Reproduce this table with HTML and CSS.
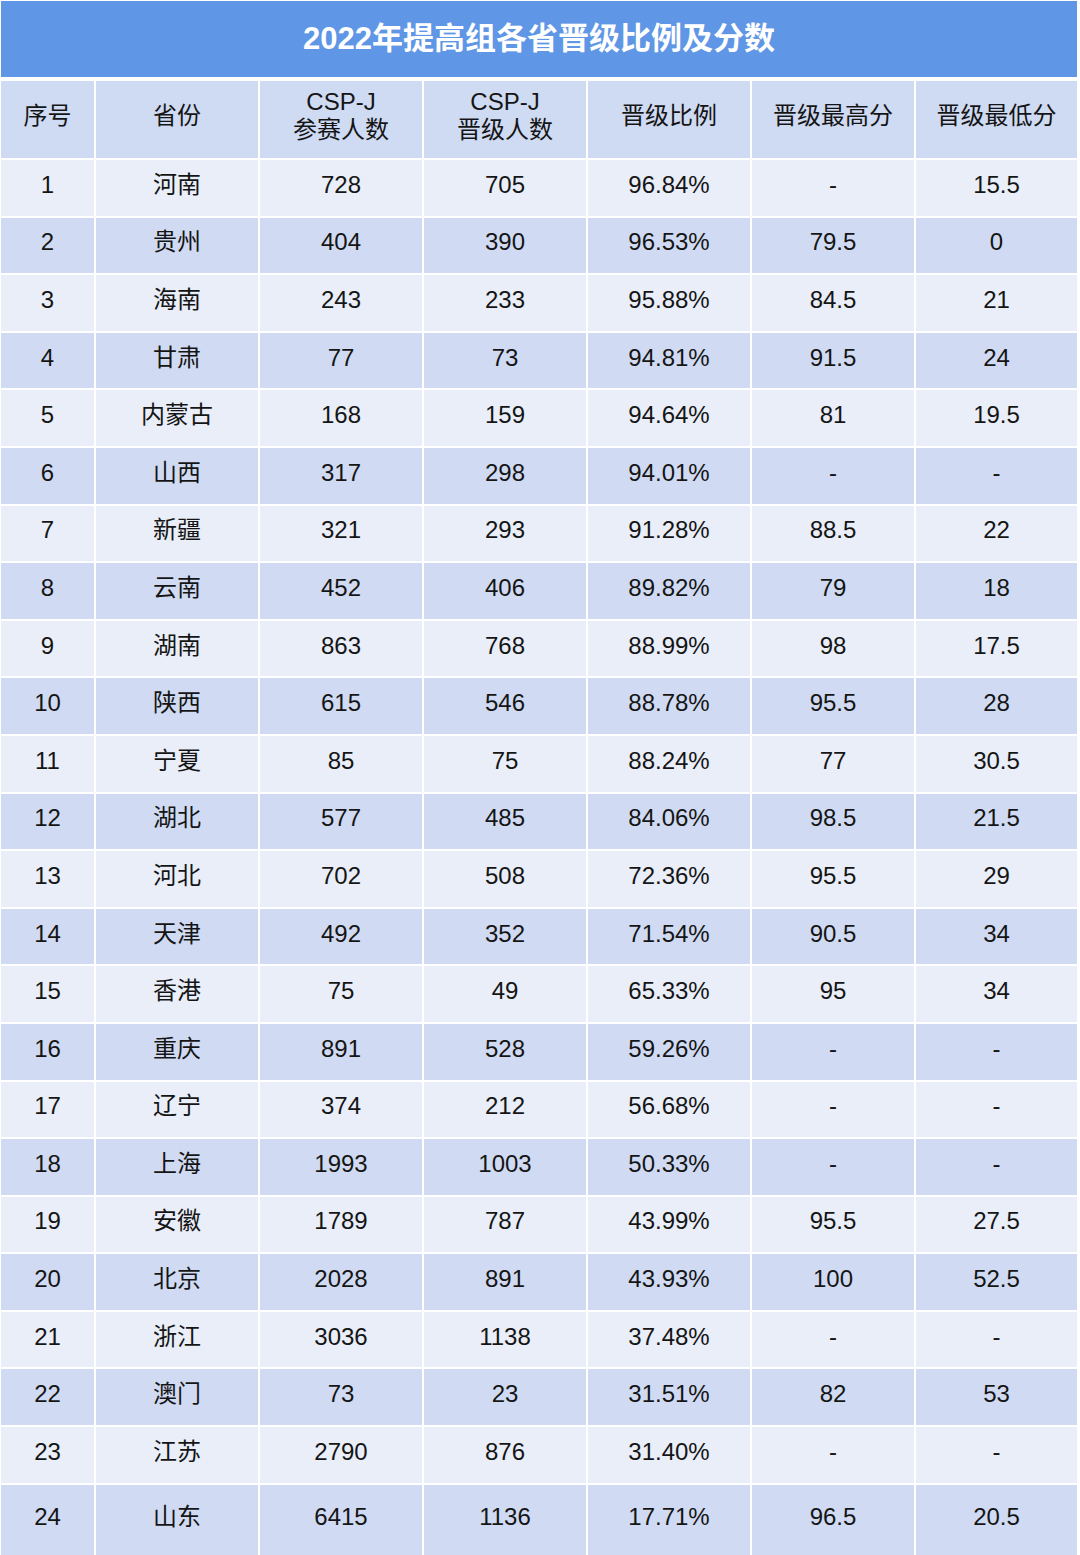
FILE: index.html
```html
<!DOCTYPE html>
<html lang="zh">
<head>
<meta charset="utf-8">
<link rel="stylesheet" href="styles.css">
</head>
<body>
<div class="page">
  <div class="title">2022年提高组各省晋级比例及分数</div>
  <div class="grid" id="grid">
    <div class="cell head">序号</div>
    <div class="cell head">省份</div>
    <div class="cell head two">CSP-J<br>参赛人数</div>
    <div class="cell head two">CSP-J<br>晋级人数</div>
    <div class="cell head">晋级比例</div>
    <div class="cell head">晋级最高分</div>
    <div class="cell head">晋级最低分</div>
  </div>
</div>
<script src="script.js"></script>
</body>
</html>
```
FILE: script.js
```js
var data = [
  [1,"河南",728,705,"96.84%","-","15.5"],
  [2,"贵州",404,390,"96.53%","79.5","0"],
  [3,"海南",243,233,"95.88%","84.5","21"],
  [4,"甘肃",77,73,"94.81%","91.5","24"],
  [5,"内蒙古",168,159,"94.64%","81","19.5"],
  [6,"山西",317,298,"94.01%","-","-"],
  [7,"新疆",321,293,"91.28%","88.5","22"],
  [8,"云南",452,406,"89.82%","79","18"],
  [9,"湖南",863,768,"88.99%","98","17.5"],
  [10,"陕西",615,546,"88.78%","95.5","28"],
  [11,"宁夏",85,75,"88.24%","77","30.5"],
  [12,"湖北",577,485,"84.06%","98.5","21.5"],
  [13,"河北",702,508,"72.36%","95.5","29"],
  [14,"天津",492,352,"71.54%","90.5","34"],
  [15,"香港",75,49,"65.33%","95","34"],
  [16,"重庆",891,528,"59.26%","-","-"],
  [17,"辽宁",374,212,"56.68%","-","-"],
  [18,"上海",1993,1003,"50.33%","-","-"],
  [19,"安徽",1789,787,"43.99%","95.5","27.5"],
  [20,"北京",2028,891,"43.93%","100","52.5"],
  [21,"浙江",3036,1138,"37.48%","-","-"],
  [22,"澳门",73,23,"31.51%","82","53"],
  [23,"江苏",2790,876,"31.40%","-","-"],
  [24,"山东",6415,1136,"17.71%","96.5","20.5"]
];
var grid = document.getElementById("grid");
data.forEach(function (row, i) {
  row.forEach(function (v) {
    var d = document.createElement("div");
    d.className = "cell " + (i % 2 === 0 ? "odd" : "even") + (i === data.length - 1 ? " last" : "");
    d.textContent = v;
    grid.appendChild(d);
  });
});
```
FILE: styles.css
```css
html, body {
  margin: 0;
  padding: 0;
  background: #ffffff;
}
body {
  font-family: "Liberation Sans", Arial, "Noto Sans CJK SC", sans-serif;
  color: #151515;
}
.page {
  padding: 1px 0 0 1px;
  width: 1076px;
}
.title {
  height: 76px;
  background: #5f96e5;
  color: #ffffff;
  font-weight: bold;
  font-size: 31px;
  display: flex;
  align-items: center;
  justify-content: center;
  margin-bottom: 4px;
  padding-bottom: 8px;
  box-sizing: border-box;
}
.grid {
  display: grid;
  grid-template-columns: 93px repeat(5, 162px) 161px;
  grid-template-rows: 77px repeat(23, 55.6px) 71px;
  gap: 2px;
}
.cell {
  display: flex;
  align-items: center;
  justify-content: center;
  text-align: center;
  font-size: 24px;
  line-height: 28px;
  padding-bottom: 6px;
  box-sizing: border-box;
}
.head {
  background: #cfdaf3;
  padding-bottom: 8px;
}
.odd {
  background: #e9eef9;
}
.even {
  background: #d0dbf3;
}
.last {
  padding-bottom: 7px;
}
```
